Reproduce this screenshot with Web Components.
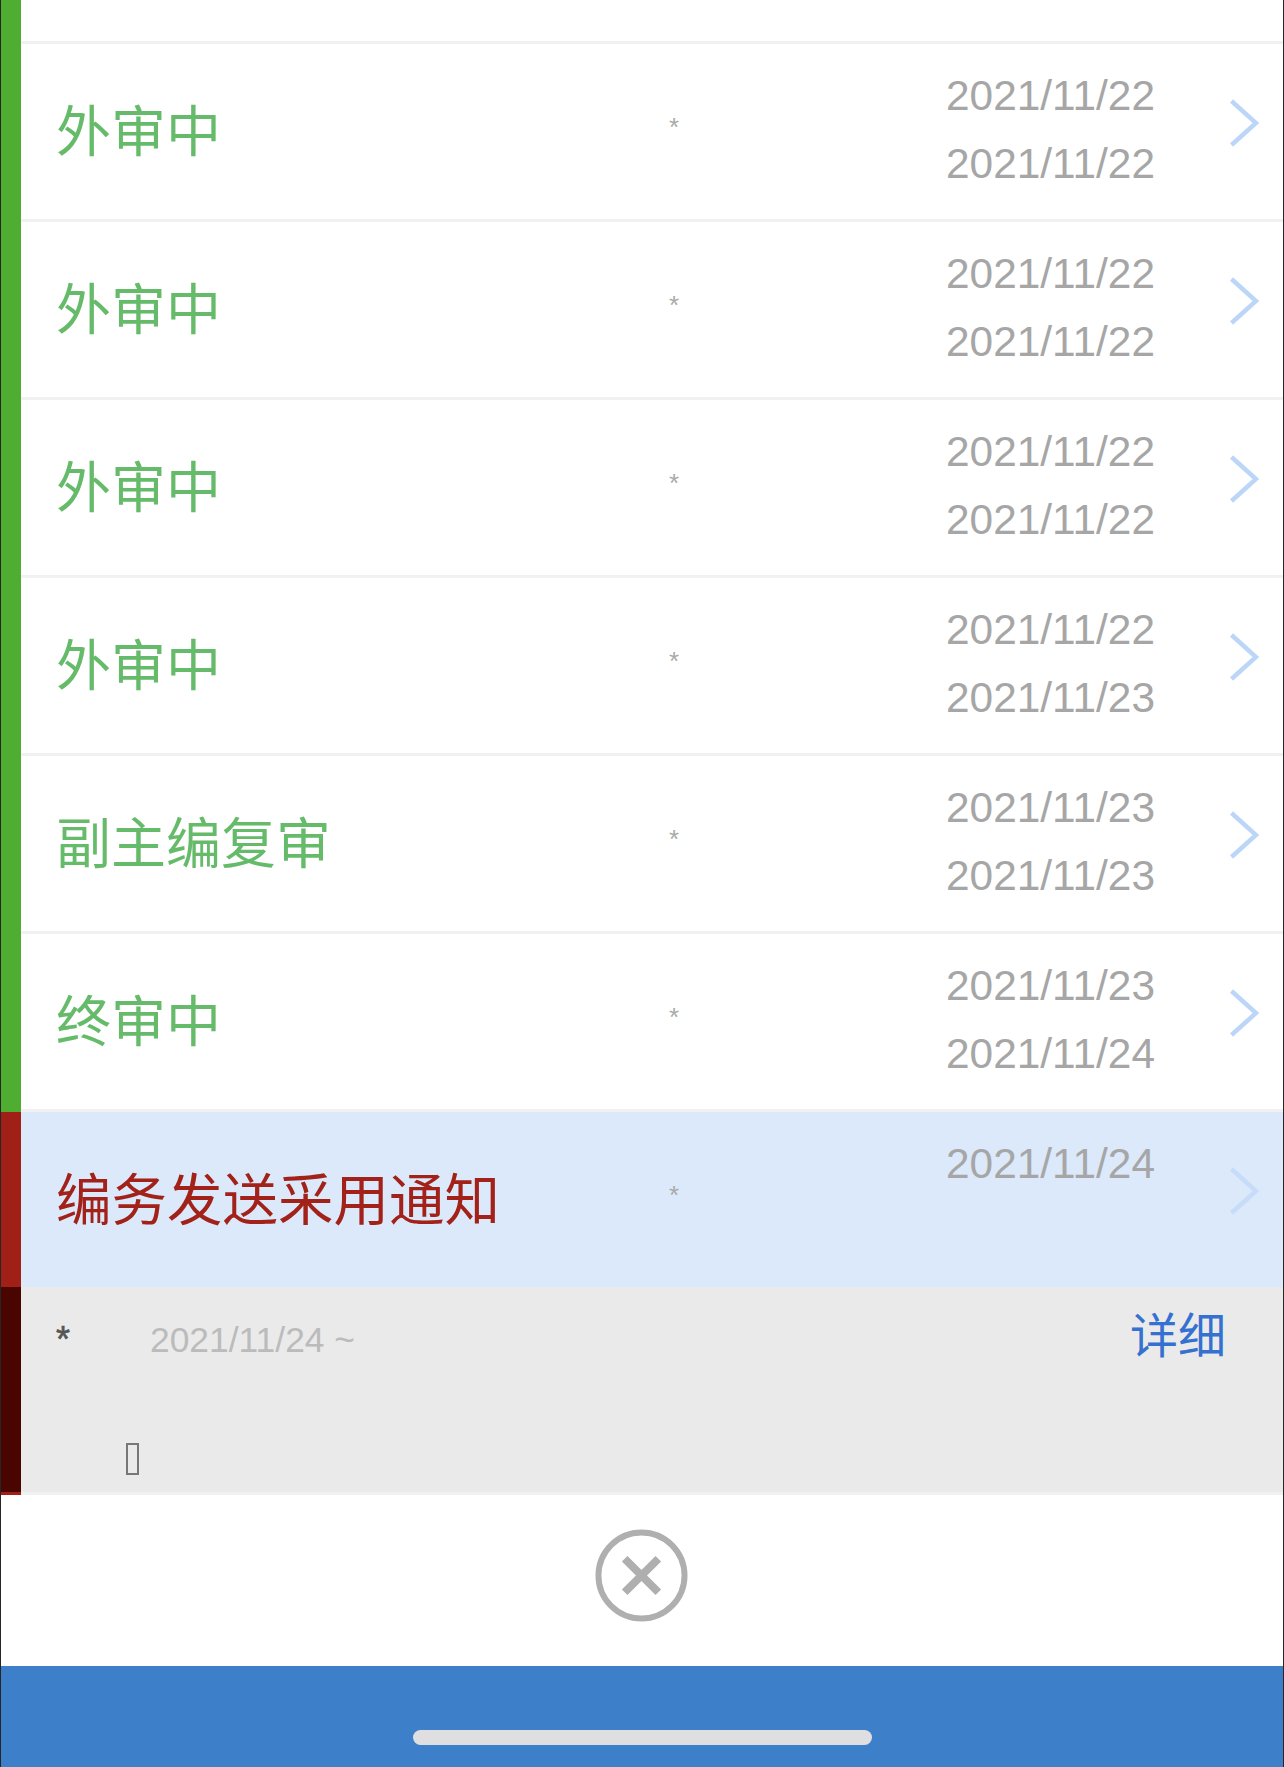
<!DOCTYPE html>
<html lang="zh-CN"><head><meta charset="utf-8"><style>
html,body{margin:0;padding:0;background:#fff;height:1767px;overflow:hidden}
</style></head><body>
<review-app>
<review-row title-text="外审中" d1="2021/11/22" d2="2021/11/22"></review-row>
<review-row title-text="外审中" d1="2021/11/22" d2="2021/11/22"></review-row>
<review-row title-text="外审中" d1="2021/11/22" d2="2021/11/22"></review-row>
<review-row title-text="外审中" d1="2021/11/22" d2="2021/11/22"></review-row>
<review-row title-text="外审中" d1="2021/11/22" d2="2021/11/23"></review-row>
<review-row title-text="副主编复审" d1="2021/11/23" d2="2021/11/23"></review-row>
<review-row title-text="终审中" d1="2021/11/23" d2="2021/11/24"></review-row>
<review-row current title-text="编务发送采用通知" d1="2021/11/24"></review-row>
<detail-panel date="2021/11/24 ~" link="详细"></detail-panel>
</review-app>
<script>
const SANS='"Liberation Sans","Noto Sans CJK SC",sans-serif';
const CJK='"Noto Sans CJK SC","Liberation Sans",sans-serif';
class ReviewApp extends HTMLElement{constructor(){super();this.attachShadow({mode:'open'}).innerHTML=`<style>
:host{display:flex;flex-direction:column;height:1767px;overflow:hidden;box-sizing:border-box;border-left:1px solid #262626;border-right:1px solid #262626;background:#fff}
.list{flex:none;height:1495px;overflow:hidden;display:flex;flex-direction:column;justify-content:flex-end}
.close{flex:none;height:171px;display:flex;align-items:center;justify-content:center}
.close svg{display:block;width:93px;height:93px;margin:-11px 2px 0 0}
.bar{flex:1;margin:0 -1px;border-left:1px solid #1d3c66;border-right:1px solid #1d3c66;background:#3e7fca;display:flex;align-items:flex-end;justify-content:center;padding-bottom:22px}
.home{width:459px;height:15px;border-radius:8px;background:#dfdfe1}
</style>
<div class="list"><slot></slot></div>
<div class="close"><svg viewBox="0 0 94 94" aria-hidden="true"><circle cx="47" cy="47" r="43.500" fill="none" stroke="#afafaf" stroke-width="6"/><path d="M30 30 64 64M64 30 30 64" fill="none" stroke="#afafaf" stroke-width="8"/></svg></div>
<div class="bar"><div class="home"></div></div>`}}
customElements.define('review-app',ReviewApp);
class ReviewRow extends HTMLElement{connectedCallback(){if(this.shadowRoot)return;
const cur=this.hasAttribute('current');
const d2=this.getAttribute('d2');
this.attachShadow({mode:'open'}).innerHTML=`<style>
:host{display:grid;grid-template-columns:20px 1fr;flex:none;height:${cur?175:178}px;background:${cur?'#dbe9fa':'#fff'}}
.mark{background:${cur?'#a01f17':'#4fae32'}}
.body{display:grid;grid-template-columns:613px 277px 283px 30px;padding-left:35px;box-sizing:border-box;border-bottom:${cur?0:3}px solid #f1f1f1}
.title{align-self:center;font:${cur?55.500:55}px/70px ${CJK};color:${cur?'#a2221a':'#66bb6a'};white-space:nowrap;margin-top:${cur?-8:-9}px}
.star{font:26px/30px ${SANS};color:#aaa;padding-top:68px}
.dates{font:42.400px/68px ${SANS};color:#a6a6a6;padding-top:18px;white-space:nowrap}
.dates div{height:68px}
svg{display:block;width:30px;height:48px;margin-top:55px}
</style>
<div class="mark"></div>
<div class="body">
<div class="title">${this.getAttribute('title-text')}</div>
<div class="star">*</div>
<div class="dates"><div>${this.getAttribute('d1')}</div>${d2?`<div>${d2}</div>`:''}</div>
<svg viewBox="0 0 30 48" aria-hidden="true"><path d="M2.500 2 27 24 2.500 46" fill="none" stroke="${cur?'#c6dcf8':'#bcd6f8'}" stroke-width="4.500"/></svg>
</div>`}}
customElements.define('review-row',ReviewRow);
class DetailPanel extends HTMLElement{connectedCallback(){if(this.shadowRoot)return;
this.attachShadow({mode:'open'}).innerHTML=`<style>
:host{display:grid;grid-template-columns:20px 1fr;flex:none;height:208px}
.mark{background:#4a0500;border-bottom:3px solid #a01f17}
.body{background:#eaeaea;border-bottom:3px solid #f1f1f1;padding:15px 57px 0 35px}
.top{display:flex;height:63px}
.star{width:94px;font:36px/60px ${SANS};color:#555;padding-top:8px;box-sizing:border-box;height:60px;-webkit-text-stroke:.6px #555}
.date{font:35.400px/60px ${SANS};color:#bbb;padding-top:8px;box-sizing:border-box;height:60px}
.link{margin-left:auto;font:48px/60px ${CJK};color:#3571d0}
.tofu{box-sizing:border-box;width:13px;height:32px;border:2px solid #777;margin:78px 0 0 70px}
</style>
<div class="mark"></div>
<div class="body">
<div class="top"><div class="star">*</div><div class="date">${this.getAttribute('date')}</div><div class="link">${this.getAttribute('link')}</div></div>
<div class="tofu"></div>
</div>`}}
customElements.define('detail-panel',DetailPanel);
</script></body></html>
